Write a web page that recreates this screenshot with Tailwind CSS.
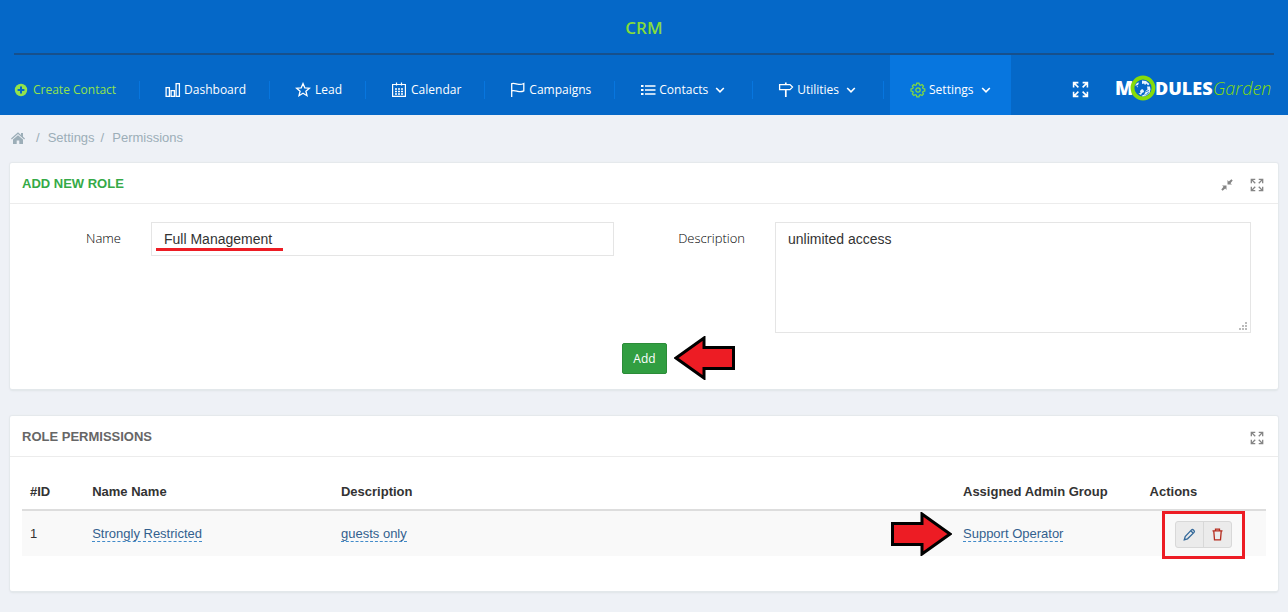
<!DOCTYPE html>
<html lang="en">
<head>
<meta charset="utf-8">
<meta name="viewport" content="width=device-width, initial-scale=1">
<title>CRM - Permissions</title>
<script src="https://cdn.jsdelivr.net/npm/@tailwindcss/browser@4"></script>
</head>
<body class="min-h-screen bg-[#eef1f6] font-['Liberation_Sans',sans-serif] text-[13px] leading-5 text-[#333]">

<svg class="hidden" aria-hidden="true">
  <symbol id="expand" viewBox="0 0 16 16">
    <path d="M1.500 6V1.500H6M10 1.500h4.500V6M1.500 10v4.500H6M10 14.500h4.500V10M2 2l4 4M14 2l-4 4M2 14l4-4M14 14l-4-4" fill="none" stroke="currentColor" stroke-width="1.500"/>
  </symbol>
  <symbol id="chevron" viewBox="0 0 10 10">
    <path d="M1.200 3 5 6.800 8.800 3" fill="none" stroke="currentColor" stroke-width="1.600"/>
  </symbol>
</svg>

<header class="bg-[#0568c8] font-['Open_Sans',sans-serif] text-white">
  <div class="px-[14px]">
    <h1 class="h-[55px] border-b-2 border-[#17508c] text-center text-[17px] leading-[55px] font-semibold text-[#84dc3c]">CRM</h1>
  </div>
  <div class="flex h-[60px] text-xs">
    <nav class="flex pl-[14px]" aria-label="Main">
      <a href="#" class="flex items-center pt-[9px] text-[#93e34b]">
        <span class="flex h-[18px] items-center gap-[5px] border-r border-[#0776df] pr-[23px]">
          <svg class="size-[14px]" viewBox="0 0 14 14"><circle cx="7" cy="7" r="6.200" fill="currentColor"/><path d="M7 3.600v6.800M3.600 7h6.800" stroke="#0568c8" stroke-width="2"/></svg>Create Contact</span>
      </a>
      <a href="#" class="flex items-center pt-[9px]">
        <span class="flex h-[18px] items-center gap-[3px] border-r border-[#0776df] pr-[23px] pl-[25px]">
          <svg class="size-4" viewBox="0 0 16 16" fill="none" stroke="currentColor" stroke-width="1.300"><path d="M1.100 5.600h3.300v8.800H1.100zM6.100 8.600h3.300v5.800H6.100zM11.100 1.600h3.300v12.800h-3.300z"/></svg>Dashboard</span>
      </a>
      <a href="#" class="flex items-center pt-[9px]">
        <span class="flex h-[18px] items-center gap-[4px] border-r border-[#0776df] pr-[23px] pl-[25px]">
          <svg class="size-4" viewBox="0 0 16 16" fill="none" stroke="currentColor" stroke-width="1.300"><path d="m8 1.600 1.800 4.200 4.600.4-3.500 3 1.100 4.500L8 11.300l-4 2.400 1.100-4.500-3.500-3 4.600-.4z"/></svg>Lead</span>
      </a>
      <a href="#" class="flex items-center pt-[9px]">
        <span class="flex h-[18px] items-center gap-[4px] border-r border-[#0776df] pr-[23px] pl-[25px]">
          <svg class="size-4" viewBox="0 0 16 16" fill="none" stroke="currentColor" stroke-width="1.200"><path d="M1.600 2.500h12.800v11.900H1.600zM5.500.5v3M10.500.5v3"/><path d="M4 7h8M4 9.500h8M4 12h8" stroke-width="1.600" stroke-dasharray="2 1"/></svg>Calendar</span>
      </a>
      <a href="#" class="flex items-center pt-[9px]">
        <span class="flex h-[18px] items-center gap-[3px] border-r border-[#0776df] pr-[23px] pl-[25px]">
          <svg class="size-4" viewBox="0 0 16 16" fill="none" stroke="currentColor" stroke-width="1.300"><path d="M1.700 15V1.700c2.300-1 4 .1 6 .5s4 .3 6.100-.7v7.300c-2.100 1-4 1-6 .5s-3.800-1.200-6-.5"/></svg>Campaigns</span>
      </a>
      <a href="#" class="flex items-center pt-[9px]">
        <span class="flex h-[18px] items-center gap-[3px] border-r border-[#0776df] pr-[27px] pl-[25px]">
          <svg class="size-4" viewBox="0 0 16 16" fill="none" stroke="currentColor"><path d="M1 4h2.500M1 8h2.500M1 12h2.500" stroke-width="2"/><path d="M5 4h10.500M5 8h10.500M5 12h10.500" stroke-width="1.300"/></svg>Contacts<svg class="ml-1 size-[10px]"><use href="#chevron"/></svg></span>
      </a>
      <a href="#" class="flex items-center pt-[9px]">
        <span class="flex h-[18px] items-center gap-[3px] border-r border-[#0776df] pr-[27px] pl-[25px]">
          <svg class="size-4" viewBox="0 0 16 16" fill="none" stroke="currentColor" stroke-width="1.300"><path d="M1.600 2.600H12l2.500 2.500L12 7.600H1.600z"/><path d="M7.800.5v2M7.800 8v7" stroke-width="1.700"/></svg>Utilities<svg class="ml-1 size-[10px]"><use href="#chevron"/></svg></span>
      </a>
      <a href="#" class="ml-[6px] flex items-center gap-[3px] bg-[#0776df] px-5 pt-[9px]" aria-current="page">
        <svg class="size-4 text-[#84dc3c]" viewBox="0 0 16 16" fill="none" stroke="currentColor" stroke-width="1.200"><circle cx="8" cy="8" r="2.200"/><path d="m6.800 1.200-.4 1.700-1.100.5-1.500-.9-1.500 1.500.9 1.500-.5 1.100-1.700.4v2l1.700.4.5 1.100-.9 1.500 1.500 1.500 1.500-.9 1.100.5.400 1.700h2.200l.4-1.700 1.100-.5 1.500.9 1.500-1.500-.9-1.500.5-1.100 1.700-.4V7l-1.700-.4-.5-1.100.9-1.500-1.500-1.500-1.500.9-1.100-.5-.4-1.700z"/></svg>Settings<svg class="ml-1 size-[10px]"><use href="#chevron"/></svg>
      </a>
    </nav>
    <div class="ml-auto flex items-center pt-2 pr-4">
      <button type="button" class="mr-[26px]" aria-label="Full screen"><svg class="size-[17px]"><use href="#expand"/></svg></button>
      <a href="#" class="block pb-[3px]" aria-label="ModulesGarden">
        <svg class="h-[28px] w-[157px]" viewBox="0 0 157 28">
          <text x="0" y="21" font-family="Open Sans, sans-serif" font-size="19" font-weight="800" fill="#fff">M</text>
          <circle cx="28" cy="14" r="10.500" fill="#0568c8" stroke="#86db0a" stroke-width="3.800"/>
          <path d="m20 11.500 2-2.500 2-.500-1 2.500-1.500.500zM21.500 12.500l1.500-.500-.500 1.500zM27 6.500l4 .5 3.500 3-1.500 1.500-1.500-2-1.500 1.500-1-1.500-2 .500zM32 12.500h3l.5 3-1 3.500-4 3-3 .500-1-1 3-1 .5-3 2.500-2zM25 17l2-2 1.500 1 .5 2-2 1-1 2-2.500-1.500 2-.500z" fill="#e8f4ff"/>
          <path d="m27 21.500 3-3.500 4-1.500M30 21.500l2-2 2-1" stroke="#0568c8" stroke-width=".8" fill="none"/>
          <text x="40" y="21" font-family="Open Sans, sans-serif" font-size="18" font-weight="800" fill="#fff">DULES</text>
          <text x="98" y="21" font-family="Open Sans, sans-serif" font-size="18" font-weight="300" font-style="italic" fill="#86db0a">Garden</text>
        </svg>
      </a>
    </div>
  </div>
</header>

<nav class="flex h-12 items-center pb-[3px] pl-[11px] text-[#9caeb8]" aria-label="Breadcrumb">
  <a href="#" aria-label="Home"><svg class="block h-[12px] w-[14px]" viewBox="0 0 14 12" fill="currentColor"><path d="M7 .3 10 3V1h2v3.800l2 1.700-.8.900L7 2.100.8 7.400 0 6.500z"/><path d="m7 3.200 5 4.200V12H8.300V8.500H5.700V12H2V7.400z"/></svg></a>
  <span class="ml-[11px]">/</span>
  <a href="#" class="ml-2">Settings</a>
  <span class="ml-[6px]">/</span>
  <a href="#" class="ml-2">Permissions</a>
</nav>

<main class="mx-[10px] flex flex-col gap-[27px] pb-5">
  <section class="rounded-xs bg-white shadow-[0_0_1px_1px_#e4e8ec,0_2px_2px_#dfe4e8]">
    <header class="flex h-[41px] items-center border-b border-[#ececec] px-3">
      <h2 class="pt-px font-bold text-[#35aa47]">ADD NEW ROLE</h2>
      <div class="ml-auto flex items-center gap-[17px] pt-1 pr-[2px] text-[#858585]">
        <button type="button" aria-label="Collapse"><svg class="block size-3" viewBox="0 0 12 12"><path d="M6.500 1v4.500H11L9.500 4.200 11.700 1.600 10.400.3 7.800 2.500zM5.500 11V6.500H1l1.500 1.300L.3 10.400l1.300 1.300 2.600-2.200z" fill="currentColor"/></svg></button>
        <button type="button" aria-label="Full screen"><svg class="block size-[14px]"><use href="#expand"/></svg></button>
      </div>
    </header>
    <form class="pt-[18px] pr-[27px] pb-[15px] pl-[15px]" onsubmit="return false">
      <div class="grid grid-cols-[96fr_463fr_101fr_476fr] items-start gap-x-[30px]">
        <label for="role-name" class="pt-[6px] text-right font-['Open_Sans',sans-serif] font-light text-black">Name</label>
        <div class="relative">
          <input id="role-name" type="text" value="Full Management" class="block h-[34px] w-full border border-[#e5e5e5] bg-white px-3 text-sm text-[#333] outline-none">
          <span class="absolute bottom-[5px] left-[5px] h-[3px] w-[127px] bg-[#ed1c24]"></span>
        </div>
        <label for="role-description" class="pt-[6px] text-right font-['Open_Sans',sans-serif] font-light text-black">Description</label>
        <div class="relative">
          <textarea id="role-description" class="block h-[111px] w-full resize-none border border-[#e5e5e5] bg-white px-3 py-[6px] text-sm text-[#333] outline-none">unlimited access</textarea>
          <svg class="absolute right-[4px] bottom-[3px] size-2" viewBox="0 0 8 8" fill="#bbb"><path d="M6 0h2v2H6zM3 3h2v2H3zM6 3h2v2H6zM0 6h2v2H0zM3 6h2v2H3zM6 6h2v2H6z"/></svg>
        </div>
      </div>
      <div class="mt-[10px] flex justify-center pl-[13px]">
        <div class="relative">
          <button type="submit" class="block h-[31px] rounded-xs border border-[#2b8c38] bg-[#319e41] px-[10px] font-['Open_Sans',sans-serif] text-xs text-white">Add</button>
          <svg class="absolute -top-[7px] left-[52px] h-[44px] w-[61px]" viewBox="0 0 61 44"><path d="M2 22 30 2v9.500h29.500v21H30V42z" fill="#ed1c24" stroke="#000" stroke-width="3"/></svg>
        </div>
      </div>
    </form>
  </section>

  <section class="rounded-xs bg-white shadow-[0_0_1px_1px_#e4e8ec,0_2px_2px_#dfe4e8]">
    <header class="flex h-[41px] items-center border-b border-[#ececec] px-3">
      <h2 class="pt-px font-bold text-[#666]">ROLE PERMISSIONS</h2>
      <button type="button" class="mt-1 mr-[2px] ml-auto text-[#858585]" aria-label="Full screen"><svg class="block size-[14px]"><use href="#expand"/></svg></button>
    </header>
    <div class="px-3 pt-[16px] pb-[35px]">
      <table class="w-full table-fixed border-collapse text-left">
        <colgroup><col class="w-[5%]"><col class="w-[20%]"><col class="w-[50%]"><col class="w-[15%]"><col class="w-[10%]"></colgroup>
        <thead>
          <tr class="h-[37px] border-b-2 border-[#ddd]">
            <th class="px-2 pt-[2px]">#ID</th><th class="px-2 pt-[2px]">Name Name</th><th class="px-2 pt-[2px]">Description</th><th class="px-2 pt-[2px]">Assigned Admin Group</th><th class="px-2 pt-[2px]">Actions</th>
          </tr>
        </thead>
        <tbody>
          <tr class="h-[46px] bg-[#f9f9f9] text-[#335f8e]">
            <td class="px-2 text-[#333]">1</td>
            <td class="px-2"><a href="#" class="border-b border-dashed border-[#428bca]">Strongly Restricted</a></td>
            <td class="px-2"><a href="#" class="border-b border-dashed border-[#428bca]">guests only</a></td>
            <td class="px-2">
              <div class="relative"><a href="#" class="border-b border-dashed border-[#428bca]">Support Operator</a>
                <svg class="absolute -top-[12px] -left-[72px] h-[44px] w-[61px]" viewBox="0 0 61 44"><path d="M59 22 31 2v9.500H1.500v21H31V42z" fill="#ed1c24" stroke="#000" stroke-width="3"/></svg>
              </div>
            </td>
            <td class="pt-[2px] pl-[33px]">
              <div class="relative flex w-[57px]">
                <div class="flex h-[27px] w-full divide-x divide-[#d8d8d8] rounded-[3px] border border-[#d8d8d8] bg-[#ebebeb]">
                  <button type="button" class="flex flex-1 items-center justify-center text-[#34699a]" aria-label="Edit"><svg class="size-[13px]" viewBox="0 0 13 13" fill="none" stroke="currentColor" stroke-width="1.300"><path d="m1.300 11.700.9-3.200 6.300-6.600c1.200-1.200 3.800 1.100 2.600 2.500l-6.600 6.400zM8 3l2.300 2.200"/></svg></button>
                  <button type="button" class="flex flex-1 items-center justify-center text-[#b52b1d]" aria-label="Delete"><svg class="size-[13px]" viewBox="0 0 13 13" fill="none" stroke="currentColor" stroke-width="1.300"><path d="M1.500 2.900h10M4.500 2.700V1.100h4v1.600M2.800 3.200l.7 8.700h6l.7-8.700"/></svg></button>
                </div>
                <span class="pointer-events-none absolute -top-[10px] -left-[13px] h-[48px] w-[83px] border-3 border-[#ed1c24]"></span>
              </div>
            </td>
          </tr>
        </tbody>
      </table>
    </div>
  </section>
</main>
</body>
</html>
